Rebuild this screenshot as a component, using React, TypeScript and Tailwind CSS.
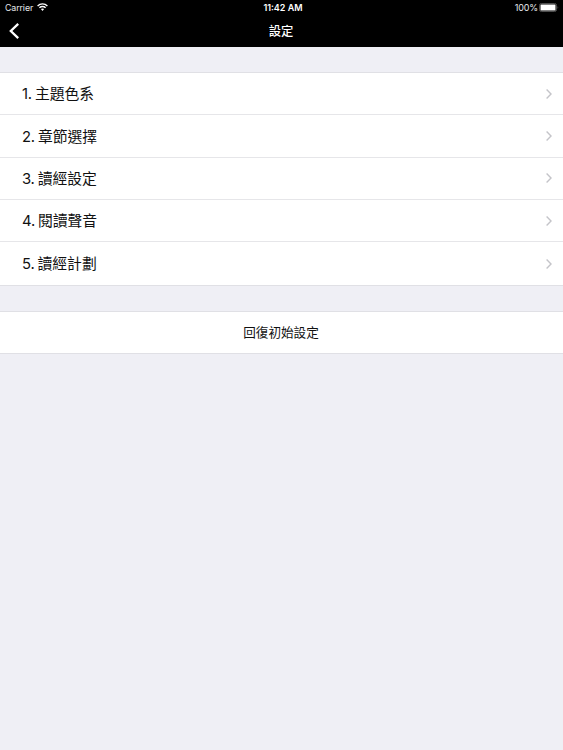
import type { ReactNode } from 'react';

const items = ['主題色系', '章節選擇', '讀經設定', '閱讀聲音', '讀經計劃'];

function StatusBar() {
  return (
    <div className="grid h-[15px] grid-cols-3 items-center pr-[4px] pl-[5px] text-[9px] leading-none">
      <div className="flex items-center gap-1">
        <span className="pt-px text-[8.8px] tracking-[-0.1px] text-gray-200">Carrier</span>
        <svg width="11" height="8" viewBox="0 0 11 8" fill="none" stroke="white" strokeWidth="1.4">
          <path d="M0.6 2.9C3.3 0.2 7.7 0.2 10.4 2.9" />
          <path d="M2.4 4.8C4.1 3.1 6.9 3.1 8.6 4.8" />
          <path d="M5.5 7.9L3.9 6.1C4.8 5.3 6.2 5.3 7.1 6.1Z" fill="white" stroke="none" />
        </svg>
      </div>
      <span className="pl-[2px] text-center text-[9px] font-semibold">11:42 AM</span>
      <div className="flex items-center justify-end gap-[1px]">
        <span className="tracking-[-0.15px] text-gray-200">100%</span>
        <svg width="20" height="9" viewBox="0 0 20 9">
          <rect x="0.5" y="0.5" width="17" height="8" rx="1.8" fill="none" stroke="#4d4d4d" />
          <rect x="1.5" y="1.5" width="15" height="6" rx="0.6" fill="white" />
          <path d="M18.5 3.2C19.5 3.6 19.5 5.4 18.5 5.8Z" fill="#4d4d4d" />
        </svg>
      </div>
    </div>
  );
}

function Header() {
  return (
    <header className="h-[47px] bg-black text-white">
      <StatusBar />
      <div className="grid h-8 grid-cols-3 items-center">
        <button aria-label="返回" className="pl-[9px]">
          <svg width="11" height="16" viewBox="0 0 11 16" fill="none" stroke="white" strokeWidth="2.3">
            <path d="M9.2 0.9L1.8 8L9.2 15.1" />
          </svg>
        </button>
        <h1 className="pt-[2px] pr-px text-center text-[12.3px] font-medium leading-none">設定</h1>
      </div>
    </header>
  );
}

function Section({ children }: { children: ReactNode }) {
  return (
    <section className="divide-y divide-[#e6e6e9] border-y border-[#e0e0e5] bg-white">{children}</section>
  );
}

export default function App() {
  return (
    <div className="min-h-screen bg-[#efeff5] font-['Inter','Noto_Sans_CJK_TC',sans-serif] text-[#111]">
      <Header />

      <main className="flex flex-col gap-[25.6px] pt-[25px]">
        <Section>
          {items.map((label, i) => (
            <button key={label} className="flex h-[42.35px] w-full items-center justify-between pr-[10px] pl-[22px]">
              <span className="flex items-baseline gap-[3px] pt-[2px] text-[14.8px] leading-none">
                <span className="tracking-[-0.2px]">{i + 1}.</span>
                <span>{label}</span>
              </span>
              <svg width="8" height="10" viewBox="0 0 8 10" fill="none" stroke="#c4c4c9" strokeWidth="1.4">
                <path d="M1.6 0.6L6 5L1.6 9.4" />
              </svg>
            </button>
          ))}
        </Section>

        {/* Reset */}
        <Section>
          <button className="flex h-[41px] w-full items-center justify-center pt-px pr-px text-[12.6px] leading-none">
            回復初始設定
          </button>
        </Section>
      </main>
    </div>
  );
}
